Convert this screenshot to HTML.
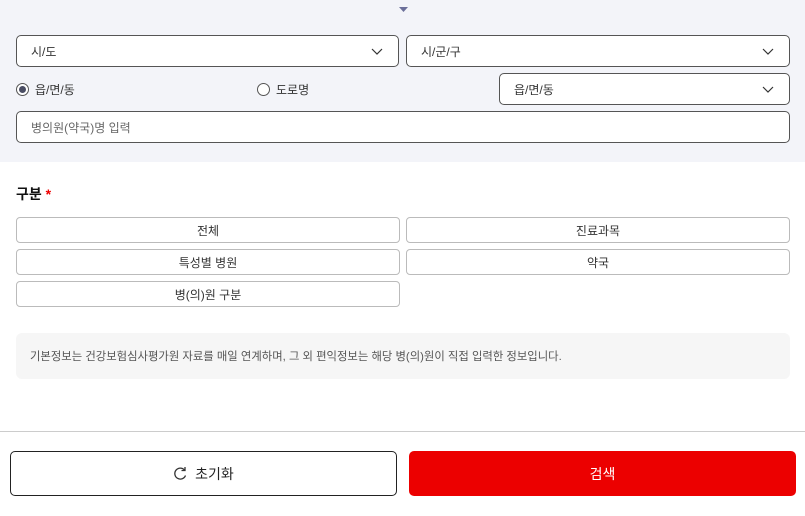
<!DOCTYPE html>
<html><head><meta charset="utf-8"><style>
*{box-sizing:border-box;margin:0;padding:0}
body{width:805px;height:516px;background:#fff;font-family:"Liberation Sans","Noto Sans CJK KR",sans-serif;color:#222;position:relative;overflow:hidden}
.a{position:absolute}
.top{left:0;top:0;width:805px;height:162px;background:#f3f4f9}
.sel{background:#fff;border:1px solid #555;border-radius:5px;font-size:12px;padding-left:14px;display:flex;align-items:center;color:#333}
.sel svg{position:absolute;right:15px;top:50%;margin-top:-3px}
.btn{border:1px solid #bbb;border-radius:4px;font-size:12px;display:flex;align-items:center;justify-content:center;color:#333;background:#fff}
.radio{font-size:12px;display:flex;align-items:center;color:#333}
.radio i{display:inline-block;width:13px;height:13px;border:1px solid #555;border-radius:50%;margin-right:6px;position:relative;background:#fff}
</style></head><body>
<div class="a top"></div>
<svg class="a" style="left:399px;top:7px" width="9" height="5"><path d="M0 0H9L4.5 5Z" fill="#6b6f9a"/></svg>
<div class="a sel" style="left:16px;top:35px;width:383px;height:32px">시/도<svg width="12" height="7"><path d="M1 1L6 6L11 1" stroke="#333" stroke-width="1.2" fill="none"/></svg></div>
<div class="a sel" style="left:406px;top:35px;width:384px;height:32px">시/군/구<svg width="12" height="7"><path d="M1 1L6 6L11 1" stroke="#333" stroke-width="1.2" fill="none"/></svg></div>
<div class="a radio" style="left:16px;top:81px"><i><b style="position:absolute;left:2px;top:2px;width:7px;height:7px;border-radius:50%;background:#4a4d63"></b></i>읍/면/동</div>
<div class="a radio" style="left:257px;top:81px"><i></i>도로명</div>
<div class="a sel" style="left:499px;top:73px;width:291px;height:32px">읍/면/동<svg width="12" height="7"><path d="M1 1L6 6L11 1" stroke="#333" stroke-width="1.2" fill="none"/></svg></div>
<div class="a sel" style="left:16px;top:111px;width:774px;height:32px;color:#666">병의원(약국)명 입력</div>
<div class="a" style="left:16px;top:184px;font-size:14px;font-weight:bold;color:#111">구분 <span style="color:#e00">*</span></div>
<div class="a btn" style="left:16px;top:217px;width:384px;height:26px">전체</div>
<div class="a btn" style="left:406px;top:217px;width:384px;height:26px">진료과목</div>
<div class="a btn" style="left:16px;top:249px;width:384px;height:26px">특성별 병원</div>
<div class="a btn" style="left:406px;top:249px;width:384px;height:26px">약국</div>
<div class="a btn" style="left:16px;top:281px;width:384px;height:26px">병(의)원 구분</div>
<div class="a" style="left:16px;top:333px;width:774px;height:46px;background:#f6f6f6;border-radius:6px;font-size:11.35px;color:#555;padding:15px 0 0 14px">기본정보는 건강보험심사평가원 자료를 매일 연계하며, 그 외 편익정보는 해당 병(의)원이 직접 입력한 정보입니다.</div>
<div class="a" style="left:0;top:431px;width:805px;height:1px;background:#ccc"></div>
<div class="a btn" style="left:10px;top:451px;width:387px;height:45px;border-color:#222;border-radius:5px;font-size:14px;color:#222"><svg width="14" height="16" viewBox="0 0 14 16" style="margin-right:8px"><path d="M11.5 4A5.5 5.5 0 1 0 12.5 9.5" stroke="#333" stroke-width="1.3" fill="none"/><path d="M12 1V4.5H8.5" stroke="#333" stroke-width="1.3" fill="none"/></svg>초기화</div>
<div class="a btn" style="left:409px;top:451px;width:387px;height:45px;border:none;background:#ec0000;color:#fff;border-radius:5px;font-size:14px">검색</div>
</body></html>
